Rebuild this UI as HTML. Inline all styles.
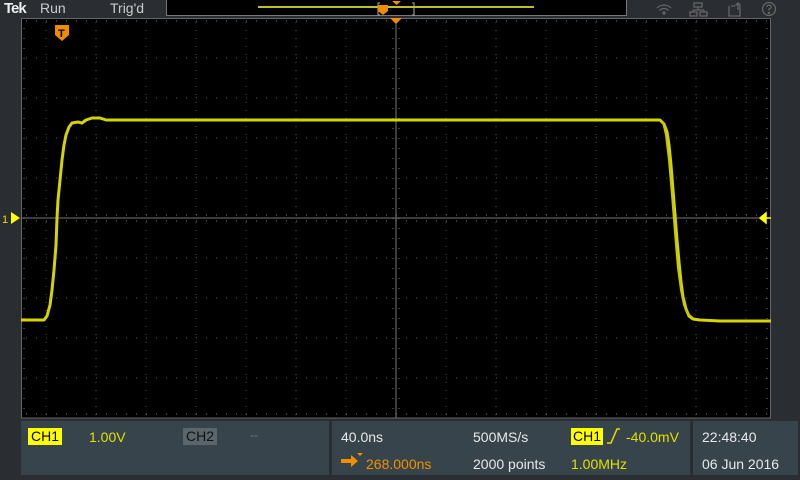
<!DOCTYPE html>
<html><head><style>
body{margin:0;width:800px;height:480px;background:#2a2d32;overflow:hidden;position:relative;font-family:"Liberation Sans","DejaVu Sans",sans-serif;}
.a{position:absolute;white-space:nowrap}
.p{position:absolute;background:#38444b;top:421px;height:54px}
.t{font-size:14px;color:#e8e8e8}
</style></head><body>
<div class="a" style="left:4px;top:0px;font-size:15px;font-weight:bold;color:#eee;letter-spacing:-1px">Tek</div>
<div class="a t" style="left:40px;top:0px;font-size:14px;color:#ccc">Run</div>
<div class="a t" style="left:110px;top:0px;font-size:14px;color:#ccc">Trig'd</div>
<div class="a" style="left:166px;top:0;width:459px;height:15px;background:#000;border:1px solid #777;border-top:0"></div>
<svg class="a" style="left:0;top:0" width="800" height="480">
<line x1="258" y1="7" x2="534" y2="7" stroke="#ffff30" stroke-width="1.5"/>
<path d="M380 3 h-2 v12 h2 M412 3 h2 v12 h-2" stroke="#aaa" fill="none"/>
<path d="M378 5 h10 v6 l-5 4 l-5 -4z" fill="#f08c00"/>
<path d="M392 1 h9 l-4.5 4z" fill="#f08c00"/>
<!-- icons -->
<g stroke="#666" fill="none" stroke-width="1.3">
<path d="M657 8 a10 10 0 0 1 14 0 M659.5 10.5 a6 6 0 0 1 9 0"/><circle cx="664" cy="13" r="1" fill="#666"/>
<path d="M694 3 h8 v4 h-8z M698 7 v3 M693 10 h11 M693 10 v2 M704 10 v2 M690 12 h7 v4 h-7z M700 12 h7 v4 h-7z"/>
<path d="M731 6 h4 M740 6 v10 h-11 v-10 M738 3 v7 M735.5 5.5 l2.5 -2.5 l2.5 2.5"/>
<circle cx="769" cy="9" r="6.5"/><path d="M767 7 a2 2 0 1 1 2 2 v1.5"/><circle cx="769" cy="13" r="0.6" fill="#666"/>
</g>
<!-- graticule -->
<rect x="21" y="18" width="750" height="400" fill="#000"/>
<rect x="21.5" y="18.5" width="749" height="399.5" fill="none" stroke="#666"/>
<g stroke="#5a5a5a" stroke-width="1" stroke-dasharray="1 7">
<line x1="46" y1="22" x2="46" y2="418"/><line x1="96" y1="22" x2="96" y2="418"/><line x1="146" y1="22" x2="146" y2="418"/><line x1="196" y1="22" x2="196" y2="418"/><line x1="246" y1="22" x2="246" y2="418"/><line x1="296" y1="22" x2="296" y2="418"/><line x1="346" y1="22" x2="346" y2="418"/><line x1="446" y1="22" x2="446" y2="418"/><line x1="496" y1="22" x2="496" y2="418"/><line x1="546" y1="22" x2="546" y2="418"/><line x1="596" y1="22" x2="596" y2="418"/><line x1="646" y1="22" x2="646" y2="418"/><line x1="696" y1="22" x2="696" y2="418"/><line x1="746" y1="22" x2="746" y2="418"/>
</g>
<g stroke="#5a5a5a" stroke-width="1" stroke-dasharray="1 9">
<line x1="26" y1="58" x2="771" y2="58"/><line x1="26" y1="98" x2="771" y2="98"/><line x1="26" y1="138" x2="771" y2="138"/><line x1="26" y1="178" x2="771" y2="178"/><line x1="26" y1="258" x2="771" y2="258"/><line x1="26" y1="298" x2="771" y2="298"/><line x1="26" y1="338" x2="771" y2="338"/><line x1="26" y1="378" x2="771" y2="378"/>
</g>
<g stroke="#777" stroke-dasharray="1 9">
<line x1="26" y1="21" x2="771" y2="21"/><line x1="26" y1="414" x2="771" y2="414"/>
<line x1="24" y1="28" x2="24" y2="418"/><line x1="767" y1="28" x2="767" y2="418"/>
<line x1="26" y1="215" x2="771" y2="215"/><line x1="26" y1="221" x2="771" y2="221"/>
<line x1="393" y1="28" x2="393" y2="418"/><line x1="399" y1="28" x2="399" y2="418"/>
</g>
<line x1="21" y1="218" x2="771" y2="218" stroke="#777"/>
<line x1="396" y1="18" x2="396" y2="418" stroke="#777"/>
<!-- waveform -->
<g fill="none" stroke="#d4d400" stroke-width="3" stroke-linejoin="round">
<polyline points="21,320 44,320 47,316 50,305 52,290 54,270 56,245 57,218 58,200 60,180 62,160 64,145 66,135 69,127 72,123 78,122 82,123 86,120 92,118 100,118 106,120 660,120 664,124 667,132 669,145 671,165 673,190 675,215 677,240 679,262 681,282 683,297 686,309 689,316 693,319 700,320 720,321 771,321"/>
</g>
<g fill="none" stroke="#c8c800" stroke-width="2">
<polyline points="663,122 666,135 669,160 672,195 674,220 676,245 678,268 681,290 684,305 688,314 693,318"/>
</g>
<!-- markers -->
<path d="M11 212 l9 6 l-9 6z" fill="#ffff00"/>
<text x="2" y="223" fill="#e0e000" font-size="11" font-family="Liberation Sans">1</text>
<path d="M760 218 l6 -5 v10z M764 218 h7" fill="#ffff00" stroke="#ffff00" stroke-width="1.5"/>
<path d="M390 18 h12 l-6 6z" fill="#f08c00"/>
<path d="M55 25 h14 v10 l-7 6 l-7 -6z" fill="#f08c00"/>
<text x="58" y="37" fill="#000" font-size="11" font-weight="bold" font-family="Liberation Sans">T</text>
</svg>
<div class="p" style="left:21px;width:308px"></div>
<div class="p" style="left:332px;width:358px"></div>
<div class="p" style="left:693px;width:105px"></div>
<div class="a" style="left:28px;top:428px;background:#ffff00;color:#000;font-size:14px;padding:0 3px;line-height:17px">CH1</div>
<div class="a" style="left:89px;top:429px;color:#e0e000;font-size:14px">1.00V</div>
<div class="a" style="left:183px;top:428px;background:#5b666c;color:#111;font-size:14px;padding:0 3px;line-height:17px">CH2</div>
<div class="a" style="left:250px;top:428px;color:#777;font-size:12px">--</div>
<div class="a t" style="left:341px;top:429px">40.0ns</div>
<svg class="a" style="left:340px;top:451px" width="26" height="18"><path d="M1 8 h10 v-4 l7 6 l-7 6 v-4 h-10z" fill="#f09000"/><path d="M17 2 h6 l-3 3z" fill="#f09000"/></svg>
<div class="a" style="left:366px;top:456px;color:#f09000;font-size:14px">268.000ns</div>
<div class="a t" style="left:473px;top:429px">500MS/s</div>
<div class="a t" style="left:473px;top:456px">2000 points</div>
<div class="a" style="left:571px;top:428px;background:#ffff00;color:#000;font-size:14px;padding:0 2px;line-height:17px">CH1</div>
<svg class="a" style="left:605px;top:426px" width="18" height="20"><path d="M2 17 h4 l6 -14 h3" stroke="#e0e000" stroke-width="1.5" fill="none"/></svg>
<div class="a" style="left:626px;top:429px;color:#e0e000;font-size:14px">-40.0mV</div>
<div class="a" style="left:571px;top:456px;color:#e0e000;font-size:14px">1.00MHz</div>
<div class="a t" style="left:702px;top:429px">22:48:40</div>
<div class="a t" style="left:702px;top:456px">06 Jun 2016</div>
</body></html>
